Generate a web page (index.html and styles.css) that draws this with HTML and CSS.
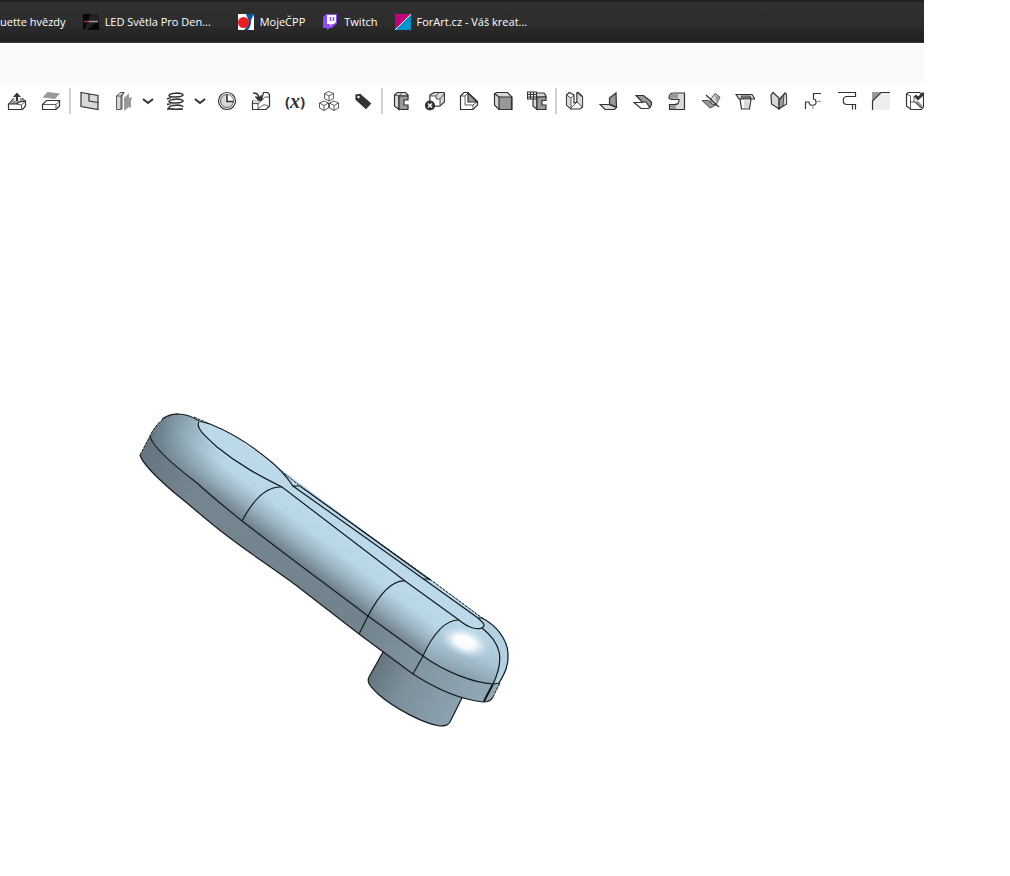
FILE: index.html
```html
<!DOCTYPE html>
<html lang="cs">
<head>
    <meta charset="UTF-8">
    <meta name="viewport" content="width=device-width, initial-scale=1.0">
    <title>Part Studio</title>
    <link rel="stylesheet" href="styles.css">
</head>
<body>
    <!-- Bookmarks -->
    <nav class="bookmarks">
        <a href="#"><span>uette hvězdy</span></a>
        <a href="#">
            <svg width="16" height="16" viewBox="0 0 16 16"><path fill="#080808" d="M0 0h16v16H0z"/><path fill="#222" d="M8 0h8v6L4 16H1z"/><path stroke="#a33" stroke-width="1.500" d="M1 7.500h5"/><path stroke="#999" stroke-width="1.500" d="M6 7.500h9"/></svg>
            <span class="cut">LED Světla Pro Den...</span>
        </a>
        <a href="#">
            <svg width="16" height="16" viewBox="0 0 16 16"><path fill="#fff" d="M0 0h16v16H0z"/><path fill="#0a559c" d="M8 0h8c0 2-3 4-3 8 0 3-1 5-3 8H6c4-4 5-7 4-11z"/><circle cx="5.500" cy="8.500" r="5.500" fill="#ed1c24"/></svg>
            <span>MojeČPP</span>
        </a>
        <a href="#">
            <svg width="16" height="16" viewBox="0 0 16 16"><path fill="#9146ff" d="M4 0h11v9l-5 5H8l-3 2v-2H1V3z"/><path fill="#fff" d="M5 1h9v7l-2 2h-2l-2 2v-2H5z"/><path stroke="#9146ff" stroke-width="1.500" d="M8.500 3v4M11.500 3v4"/></svg>
            <span>Twitch</span>
        </a>
        <a href="#">
            <svg width="16" height="16" viewBox="0 0 16 16"><path fill="#c4007a" d="M0 0h16L0 16z"/><path fill="#0094cf" d="M16 0v16H0z"/><path stroke="#fff" d="M0 16L16 0"/></svg>
            <span>ForArt.cz - Váš kreat...</span>
        </a>
    </nav>
    <div class="title-bar"></div>

    <!-- Feature tools -->
    <div class="toolbar" role="toolbar">
        <button aria-label="Extrude"><svg class="icon" viewBox="0 0 20 20"><path class="mid bare" d="M1.500 13l5-6h9l3 3-6 3z"/><path class="white" d="M1.500 13h8l3-2 6-1v5l-3 3.500h-14z"/><path class="thin" d="M1.500 13l5-6M15 7l3.500 3M9.500 13l5 1v4.500M14.500 14l4-4"/><path class="white-line" d="M8 10V7M12 10V7"/><path class="bold" d="M10 10V3"/><path class="dark bare" d="M6 6l4-4.500L14 6z"/></svg></button>
        <button aria-label="Thicken"><svg class="icon" viewBox="0 0 20 20"><path class="mid bare" d="M1.500 6.500l5-5.500 12.500 1.500L14 8z"/><path class="white" d="M1.500 13.500l4-4h13V15l-3.500 3.500H1.500z"/><path class="thin" d="M1.500 13.500H15v5M15 13.500l3.500-4"/></svg></button>
        <span class="separator"></span>
        <button aria-label="Plane"><svg class="icon" viewBox="0 0 20 20"><path class="light" d="M2 1.500l17 3v14l-17-3z"/><path d="M10 3v7l9 1.500"/></svg></button>
        <button aria-label="Mirror"><svg class="icon" viewBox="0 0 20 20"><path class="light thin" d="M3.500 5L7 1.500h4L9 5v13l-2 .5H3.500z"/><path class="thin" d="M3.500 5H8v13M8 5l3-3.500"/><path class="mid bare" d="M11 7l5-5v5l3-1-1 4v7l-2-1-5 4z"/></svg></button>
        <button class="more" aria-label="More mirror tools"><svg class="chevron" viewBox="0 0 12 12"><path d="M1 4l5 4 5-4"/></svg></button>
        <button aria-label="Helix"><svg class="icon" viewBox="0 0 20 20"><g class="coil"><path d="M18 4c0-3-14-2-14 .5S18 6 18 4M18 10c0-3-14-2-14 .5S18 12 18 10M18 16c0-3-14-2-14 .500S14 18 18 18M2 8l4-1.500M2 13.500l4-1M2 18h5"/></g></svg></button>
        <button class="more" aria-label="More curves"><svg class="chevron" viewBox="0 0 12 12"><path d="M1 4l5 4 5-4"/></svg></button>
        <button aria-label="Rollback"><svg class="icon" viewBox="0 0 20 20"><circle class="white" cx="10" cy="10" r="8.500"/><circle class="light thin" cx="10" cy="10" r="6.500"/><path class="white bare" d="M10 4v6h6a6 6 0 0 0-6-6"/><path class="heavy" d="M10 4v6.500h6"/></svg></button>
        <button aria-label="Import"><svg class="icon" viewBox="0 0 20 20"><path class="white" d="M1.500 10h3l6-1 2-7.500h4l2 2V15L15 18.500H1.500z"/><path class="light bare" d="M2 10l3-1 5 1-3 4-5-1z"/><path class="thin" d="M1.500 12.500H7v6M7 12.500L11 9l3-3h4.500M7 18l5-4h3l3.500 2"/><path class="heavy" d="M2 2c4 0 6 2 6 6"/><path class="dark bare" d="M3.500 5.500h3l1 1 3-3 1 6H7z"/></svg></button>
        <button class="variable" aria-label="Variable">(<i>x</i>)</button>
        <button aria-label="Composite part"><svg class="icon" viewBox="0 0 20 20"><g class="thin"><path class="white" d="M10 .5l4.500 2v5L10 10 5.500 7.500v-5zM5 10l4.500 2v5L5 19.500.5 17v-5zM15 10l4.500 2v5L15 19.500 10.500 17v-5z"/><path d="M5.500 2.500L10 5l4.500-2.500M10 5v5M.5 12L5 14.500 9.500 12M5 14.500v5M10.500 12l4.500 2.500 4.500-2.500M15 14.500v5"/></g></svg></button>
        <button aria-label="Tag"><svg class="icon" viewBox="0 0 20 20"><path class="dark" d="M3 4l4-.5 10.500 9L13 17.500 3 8.500z"/><circle class="white bare" cx="5.500" cy="6" r="1.200"/></svg></button>
        <span class="separator"></span>
        <button aria-label="Boolean"><svg class="icon" viewBox="0 0 20 20"><path class="light" d="M3.500 4L6.500 1.500h8L17 4v1H8v13.500L3.500 15z"/><path class="mid" d="M8 5h9v4h-4v5h4v4.500H8z"/><path class="thin" d="M3.500 4L8 5l3-3.500"/></svg></button>
        <button aria-label="Delete part"><svg class="icon" viewBox="0 0 20 20"><path class="light" d="M5 4l4-2.500h10L19.500 3v8L15 15H9L5 12z"/><path class="white thin" d="M5 5h6v3h4v7H9l-4-4zM11 5l3-3.500M15 8l4-5"/><circle class="dark" cx="5" cy="14.500" r="4.500"/><path class="white-line" d="M3 12.500l4 4M7 12.500l-4 4"/></svg></button>
        <button aria-label="Modify fillet"><svg class="icon" viewBox="0 0 20 20"><path class="white" d="M1.500 5L5 1.500h4l9.500 9V14L14 18.500H1.500z"/><path class="mid" d="M9 2v9h9z"/><path class="thin" d="M1.500 5H6l3-3M6 5v9h8l4-3M14 14v4.500"/></svg></button>
        <button aria-label="Move face"><svg class="icon" viewBox="0 0 20 20"><path class="light" d="M1.500 3l2-1.500h11L19 6v12.500H6L1.500 14z"/><path class="mid" d="M6 6h12.500v12.500H6z"/><path d="M1.500 2.500L6 6"/></svg></button>
        <button aria-label="Replace face"><svg class="icon" viewBox="0 0 20 20"><path class="light" d="M6 5l3-3h8l2 3v1h-9v12.500L6 15z"/><path class="mid" d="M10 6h9v3.500h-4V14h4v4.500h-9z"/><path class="white" d="M.5 1h9v7h-9z"/><path d="M.5 3.500h9M.5 6h9M3.500 1v7M6.500 1v7"/></svg></button>
        <span class="separator"></span>
        <button aria-label="Sheet metal"><svg class="icon" viewBox="0 0 20 20"><path class="white" d="M1.500 4l3-2.500L9 4v8l3-1V1.500h1.500l4 4V16L15 18H6l-4.500-4z"/><path class="light thin" d="M1.500 4L6 7v11l-4.500-4zM12 2l5.500 4v10l-5.500-5z"/><path class="thin" d="M6 7l3-3M6 17l6-6"/></svg></button>
        <button aria-label="Flange"><svg class="icon" viewBox="0 0 20 20"><path class="light" d="M1 13.500h9l7.500 3-2 2H6z"/><path class="mid" d="M10.500 7l6.500-5 .5 14-7-3z"/></svg></button>
        <button aria-label="Hem"><svg class="icon" viewBox="0 0 20 20"><path class="white" d="M1 11.500h8l3-2 6 2-1 5-2 1H8z"/><path class="mid" d="M3 4.500h7.500l7 5.500c2 2 1 5-1 6L13 11H9z"/></svg></button>
        <button aria-label="Tab"><svg class="icon" viewBox="0 0 20 20"><path class="light" d="M7 2h10.500v16.500h-15v-5H7c4 0 5-1 5-5H7c-3 0-5 0-5-2 0-3 2-4.500 5-4.500z"/><path class="mid bare" d="M7 2.500h4v5H3c0-3 1-5 4-5zM3 14h6v4H3z"/></svg></button>
        <button aria-label="Bend"><svg class="icon" viewBox="0 0 20 20"><path class="mid thin" d="M1 9.500h6l4 3 5 1-7 3.500z"/><path class="light thin" d="M9 9.500l5-7L19 6l-4 8-4-1z"/><path class="mid bare" d="M14 4l4.500 2-3 5z"/><path d="M5 4l13 12"/></svg></button>
        <button aria-label="Form"><svg class="icon" viewBox="0 0 20 20"><path class="light" d="M1 3.500h16l3 4.500H4z"/><path class="mid thin" d="M6 5h9l1 2H7z"/><path class="white" d="M5 8h11l-1.500 10h-8z"/><path class="light bare" d="M9 8.500h5V17H9z"/></svg></button>
        <button aria-label="Corner"><svg class="icon" viewBox="0 0 20 20"><path class="light" d="M2 4l2-2.500L10 7v11l-7.500-5z"/><path class="mid" d="M10 9l6-7 1.500 1.500V13L10 18z"/><path class="light thin" d="M15 3h2.500v10L14 15z"/></svg></button>
        <button aria-label="Bend relief"><svg class="icon" viewBox="0 0 20 20"><path d="M2.500 18v-7H6c0 5 8 4 7 0 0-2-1-3-2.500-3V2.500H18"/><path class="gray-line" d="M13 10.500h5M10 14v4"/></svg></button>
        <button aria-label="Joint"><svg class="icon" viewBox="0 0 20 20"><path d="M1 1.500h17.500v4H10c-5 0-5 8 0 8h8.500v5M15.500 13.500v5"/></svg></button>
        <button aria-label="Corner break"><svg class="icon" viewBox="0 0 20 20"><path class="pale bare" d="M1 1h18v18H1z"/><path class="mid bare" d="M1 1h9l-9 9z"/><path d="M1.500 19v-9l8.500-8.500h9"/></svg></button>
        <button aria-label="Finish sheet metal"><svg class="icon" viewBox="0 0 20 20"><path class="white" d="M1.500 3l2-1.500h11l4 3V16l-2 2.500H6L1.500 15z"/><path class="mid bare" d="M9 11l4-1 5 5-2 3z"/><path class="thin" d="M1.500 3l4 2v13M5 11h5l7 6M9 5v6"/><path class="check" d="M10 4.500l3 3L19 2"/></svg></button>
    </div>

    <!-- Model view -->
    <main class="viewport">
        <svg class="model" width="390" height="335" viewBox="130 400 390 335" role="img" aria-label="Part">
            <defs>
                <linearGradient id="round" gradientUnits="userSpaceOnUse" x1="282" y1="487" x2="251" y2="528">
                    <stop offset="0" stop-color="#bbd9e9"/>
                    <stop offset=".35" stop-color="#b9d6e6"/>
                    <stop offset=".65" stop-color="#9bb3c1"/>
                    <stop offset="1" stop-color="#6e7e89"/>
                </linearGradient>
                <linearGradient id="tail" gradientUnits="userSpaceOnUse" x1="150" y1="436" x2="222" y2="470">
                    <stop offset="0" stop-color="#5f707b" stop-opacity=".9"/>
                    <stop offset=".4" stop-color="#6f8591" stop-opacity=".5"/>
                    <stop offset="1" stop-color="#8ba1ae" stop-opacity="0"/>
                </linearGradient>
                <linearGradient id="side" gradientUnits="userSpaceOnUse" x1="140" y1="455" x2="500" y2="690">
                    <stop offset="0" stop-color="#65757f"/>
                    <stop offset=".15" stop-color="#74858f"/>
                    <stop offset=".65" stop-color="#72838d"/>
                    <stop offset="1" stop-color="#93aab8"/>
                </linearGradient>
                <linearGradient id="cap" gradientUnits="userSpaceOnUse" x1="465" y1="625" x2="445" y2="674">
                    <stop offset="0" stop-color="#b9d7e7"/>
                    <stop offset=".5" stop-color="#a9c3d2"/>
                    <stop offset="1" stop-color="#8298a5"/>
                </linearGradient>
                <linearGradient id="post" gradientUnits="userSpaceOnUse" x1="372" y1="670" x2="457" y2="712">
                    <stop offset="0" stop-color="#64747e"/>
                    <stop offset=".4" stop-color="#7d909c"/>
                    <stop offset="1" stop-color="#8da3b0"/>
                </linearGradient>
                <radialGradient id="shine">
                    <stop offset="0" stop-color="#fff"/>
                    <stop offset=".4" stop-color="#fff" stop-opacity=".9"/>
                    <stop offset="1" stop-color="#c5e0ef" stop-opacity="0"/>
                </radialGradient>
            </defs>
            <path fill="url(#post)" class="edge" d="M383 652L369 677C366 683 372 688 378 694C395 709 425 724 440 726C446 726 448 725 450 722L462 698L430 670z"/>
            <path fill="url(#side)" d="M150 436L140 455C143 466 170 490 187 503C201 515 215 527 230 538C251 554 274 569 297 586L359 634L413 674C430 685 457 699 483 702C488 702 491 701 493 697L500 683L430 640L242 500z"/>
            <path fill="url(#round)" d="M150 436C155 425 165 414 178 414C187 414 191 416 199 420L282 470L482 618L459 620L423 656L368 616L242 521L197 483C176 466 152 448 150 436z"/>
            <path fill="url(#tail)" d="M150 436C155 425 165 414 178 414C187 414 191 416 199 423L230 457L242 521L197 483C176 466 152 448 150 436z"/>
            <path fill="url(#cap)" d="M459 620Q437 625 423 656C445 672 474 683 493 684L499 683C505 673 509 665 508 653C507 639 496 625 482 618z"/>
            <path fill="#b2d0e0" d="M482 628C500 642 503 659 495 683L499 683C505 673 509 665 508 653C507 639 496 625 482 618L478 619z"/>
            <ellipse fill="url(#shine)" cx="465" cy="642" rx="27" ry="15" transform="rotate(20 465 642)"/>
            <!-- flat top -->
            <path fill="#bbd9e9" d="M199 423C195 417 204 421 210 424C235 434 270 460 280 471L297 484L427 577L482 617L484 625C483 629 477 628 473 628Q466 626 459 620L405 581L282 487C258 478 197 445 199 423z"/>
            <g class="edge">
                <path d="M140 455C143 466 170 490 187 503C201 515 215 527 230 538C251 554 274 569 297 586L359 634L413 674C430 685 457 699 483 702C488 702 491 701 493 697"/>
                <path class="dashed" d="M140 455L150 436C155 425 165 414 178 414M493 697L500 683"/>
                <path d="M162 419C167 415 172 414 178 414C187 414 193 417 199 421L210 424C235 434 257 450 269 460Q282 470 293 486"/>
                <path class="dashed" d="M194 417L210 424M281 471L300 486L427 577L482 618"/>
                <path d="M482 618C496 625 507 639 508 653C509 665 505 673 499 683"/>
                <path d="M150 436C152 448 180 470 197 483C211 496 226 508 242 521C267 540 293 560 320 580L368 616L423 656C445 672 474 683 493 684L500 683"/>
                <path d="M199 422C195 428 207 438 217 447C239 465 260 476 282 487L405 581L459 620Q466 626 473 628C478 629 484 629 484 625C484 623 481 621 478 618L397 560L293 486H300L430 580"/>
                <path d="M242 521C252 502 265 486 282 487M359 634L368 616C378 597 390 580 405 581M413 674L423 656C433 634 445 620 459 620M482 628C501 643 505 659 493 684L484 702"/>
                <path class="seam" d="M493 684L484 701"/>
                <path d="M423 579H430M478 618H483"/>
            </g>
        </svg>
    </main>
</body>
</html>
```
FILE: styles.css
```css
/* General Styles */
body, html {
    margin: 0;
    padding: 0;
}

body {
    padding-right: 86px;
    background-color: #fff;
    font-family: "Open Sans", "Noto Sans", sans-serif;
    font-size: 11px;
    overflow-x: hidden;
}

/* Bookmarks Styles */
.bookmarks {
    box-sizing: border-box;
    height: 43px;
    display: flex;
    align-items: center;
    gap: 17px;
    overflow: hidden;
    border-top: 2px solid #202026;
    border-bottom: 1px solid #393538;
    background: linear-gradient(#303030 0%, #2d2d2d 55%, #1e1e1e 100%);
}

.bookmarks a {
    display: flex;
    align-items: center;
    gap: 6px;
    color: #fff;
    line-height: 16px;
    text-decoration: none;
    white-space: nowrap;
}

.bookmarks .cut {
    width: 116px;
}

.title-bar {
    height: 40px;
    background-color: #fafafa;
}

/* Toolbar Styles */
.toolbar {
    height: 36px;
    display: flex;
    align-items: center;
    overflow: hidden;
}

.toolbar button {
    flex: none;
    width: 34px;
    height: 36px;
    padding: 0;
    display: flex;
    align-items: center;
    justify-content: center;
    border: none;
    background: none;
    cursor: pointer;
}

.toolbar .more {
    width: 16px;
    margin-right: 2px;
}

.toolbar .variable {
    color: #333;
    font: bold 15px "Open Sans", sans-serif;
}

.variable i {
    font: italic bold 20px "Liberation Serif", serif;
}

.separator {
    flex: none;
    width: 2px;
    height: 26px;
    margin: 0 1px;
    background-color: #d2d2d2;
}

/* Icon Styles */
.icon {
    width: 20px;
    height: 20px;
    fill: none;
    stroke: #333;
    stroke-width: 1.2;
}

.chevron {
    width: 12px;
    height: 12px;
    fill: none;
    stroke: #333;
    stroke-width: 2;
}

.icon .white { fill: #fff; }
.icon .pale { fill: #ededed; }
.icon .light { fill: #d9d9d9; }
.icon .mid { fill: #999; }
.icon .dark { fill: #333; }
.icon .bare { stroke: none; }
.icon .thin { stroke-width: 0.8; }
.icon .heavy { stroke-width: 1.6; }
.icon .bold { stroke-width: 2; }
.icon .coil { stroke-width: 1.6; }
.icon .check { stroke-width: 3; }
.icon .white-line { stroke: #fff; stroke-width: 1.4; }
.icon .gray-line { stroke: #999; }

/* Model Styles */
.viewport {
    padding: 281px 0 0 130px;
}

.model {
    display: block;
}

.edge {
    stroke: #151b1f;
    stroke-width: 1.2;
}

g.edge {
    fill: none;
}

.edge .dashed {
    stroke-dasharray: 3 1;
    stroke-width: 1;
}

.edge .seam {
    stroke-width: 2;
}
```
